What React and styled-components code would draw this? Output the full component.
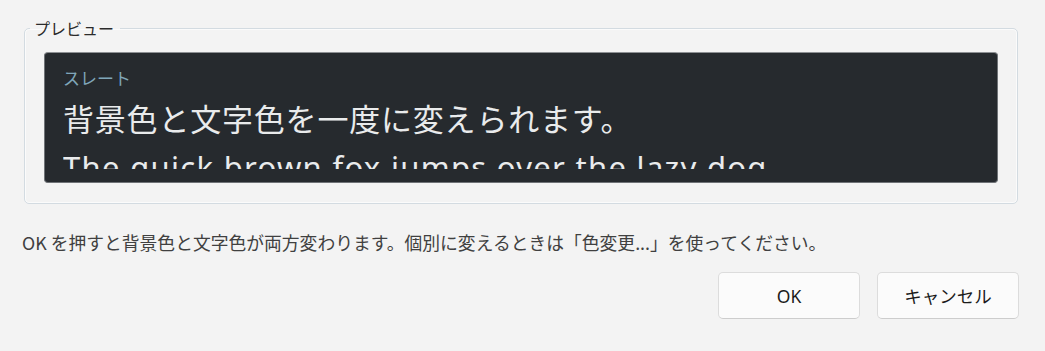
import styled, { createGlobalStyle } from "styled-components";

const GlobalStyle = createGlobalStyle`
  html, body {
    margin: 0;
    padding: 0;
    background: #f3f3f3;
  }
  body {
    font-family: "Noto Sans", "Noto Sans CJK JP", sans-serif;
    color: #1b1b1b;
  }
`;

const Dialog = styled.div`
  width: 1045px;
  height: 351px;
  box-sizing: border-box;
  padding: 19px 27px 0 24px;
  display: flex;
  flex-direction: column;
  background: #f3f3f3;
`;

const Group = styled.fieldset`
  margin: 0;
  padding: 15px 19px 20px 19px;
  border: 1px solid #d3dbe1;
  border-radius: 5px;
  box-shadow: inset 0 0 0 1px #fbfbfb;
  min-width: 0;
`;

const Legend = styled.legend`
  margin-left: -14px;
  padding: 0 6px 0 4px;
  font-size: 16px;
  line-height: 18px;
  color: #2b2b2b;
  font-family: "Noto Sans CJK JP", sans-serif;
`;

const Preview = styled.div`
  background: #262a2e;
  border: 1px solid #6f7377;
  border-top-color: #8d9093;
  border-radius: 4px;
  padding: 14px 18px 13px 18px;
  height: 131px;
  box-sizing: border-box;
  display: flex;
  flex-direction: column;
`;

const Clip = styled.div`
  flex: 1;
  min-height: 0;
  overflow: hidden;
`;

const ThemeName = styled.div`
  font-family: "Noto Sans CJK JP", sans-serif;
  font-size: 17px;
  line-height: 22px;
  color: #7fa6b9;
`;

const SampleLine = styled.div`
  font-family: "Noto Sans", "Noto Sans CJK JP", sans-serif;
  font-size: 31px;
  line-height: 48px;
  color: #e9ebec;
  white-space: nowrap;
  letter-spacing: ${p => p.$spacing || 0}px;
  &:first-child {
    margin-top: 6px;
  }
`;

const Note = styled.p`
  margin: 27px 0 0 -2px;
  font-family: "Noto Sans CJK JP", sans-serif;
  font-size: 17.8px;
  line-height: 22px;
  color: #404040;
  white-space: nowrap;
`;

const Buttons = styled.div`
  display: flex;
  justify-content: flex-end;
  gap: 17px;
  margin-top: 19px;
  margin-right: -1px;
`;

const Button = styled.button`
  width: 142px;
  height: 47px;
  background: #fbfbfb;
  border: 1px solid #dcdcdc;
  border-bottom-color: #cdcdcd;
  border-radius: 5px;
  font-family: "Noto Sans", "Noto Sans CJK JP", sans-serif;
  font-size: 17.5px;
  color: #1b1b1b;
  cursor: pointer;
`;

export default function App() {
  return (
    <>
      <GlobalStyle />
      <Dialog>
        <Group>
          <Legend>プレビュー</Legend>
          <Preview>
            <ThemeName>スレート</ThemeName>
            <Clip>
              <SampleLine $spacing={0.8}>背景色と文字色を一度に変えられます。</SampleLine>
              <SampleLine $spacing={1.3}>The quick brown fox jumps over the lazy dog</SampleLine>
            </Clip>
          </Preview>
        </Group>
        <Note>OK を押すと背景色と文字色が両方変わります。個別に変えるときは「色変更...」を使ってください。</Note>
        <Buttons>
          <Button>OK</Button>
          <Button>キャンセル</Button>
        </Buttons>
      </Dialog>
    </>
  );
}
